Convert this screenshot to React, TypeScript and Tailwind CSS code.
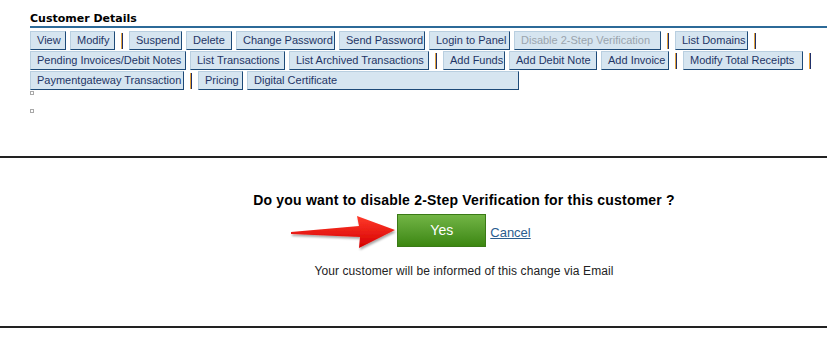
import React from "react";

type Item = { label: string; w: string; disabled?: boolean } | "sep";

const rows: Item[][] = [
  [
    { label: "View", w: "w-[36px]" },
    { label: "Modify", w: "w-[45px]" },
    "sep",
    { label: "Suspend", w: "w-[53px]" },
    { label: "Delete", w: "w-[46px]" },
    { label: "Change Password", w: "w-[99px]" },
    { label: "Send Password", w: "w-[86px]" },
    { label: "Login to Panel", w: "w-[81px]" },
    { label: "Disable 2-Step Verification", w: "w-[147px]", disabled: true },
    "sep",
    { label: "List Domains", w: "w-[73px]" },
    "sep",
  ],
  [
    { label: "Pending Invoices/Debit Notes", w: "w-[156px]" },
    { label: "List Transactions", w: "w-[95px]" },
    { label: "List Archived Transactions", w: "w-[140px]" },
    "sep",
    { label: "Add Funds", w: "w-[62px]" },
    { label: "Add Debit Note", w: "w-[88px]" },
    { label: "Add Invoice", w: "w-[68px]" },
    "sep",
    { label: "Modify Total Receipts", w: "w-[120px]" },
    "sep",
  ],
  [
    { label: "Paymentgateway Transaction", w: "w-[154px]" },
    "sep",
    { label: "Pricing", w: "w-[45px]" },
    { label: "Digital Certificate", w: "w-[272px]" },
  ],
];

function Sep() {
  return (
    <div className="flex h-[16px] w-[6px] shrink-0 justify-center self-center">
      <div className="w-[1px] bg-[#e3a23c]" />
      <div className="w-[1px] bg-[#20306a]" />
    </div>
  );
}

function ActionButton({ label, disabled, w }: { label: string; disabled?: boolean; w: string }) {
  return (
    <button
      className={
        "h-[19px] shrink-0 whitespace-nowrap border border-t-[#b9cfe0] border-l-[#b9cfe0] border-r-[#1d4a78] border-b-[#1d4a78] bg-[#d6e5f0] pl-[6px] text-left text-[11px] leading-[17px] " +
        (disabled ? "text-[#9aa4ad] " : "text-[#1f3566] ") +
        w
      }
    >
      {label}
    </button>
  );
}

function Arrow() {
  return (
    <svg width="112" height="40" viewBox="0 0 112 40" className="absolute left-[-108px] top-[-2px]">
      <defs>
        <linearGradient id="ar" x1="0" y1="0" x2="0" y2="1">
          <stop offset="0" stopColor="#ff3a2a" />
          <stop offset="1" stopColor="#d40000" />
        </linearGradient>
        <filter id="sh" x="-10%" y="-30%" width="130%" height="160%">
          <feDropShadow dx="1" dy="2" stdDeviation="1.2" floodColor="#000" floodOpacity="0.35" />
        </filter>
      </defs>
      <path d="M2 20 L70 14 L68 4 L106 18 L70 36 L71 25 L2 22 Z" fill="url(#ar)" filter="url(#sh)" />
    </svg>
  );
}

export default function App() {
  return (
    <div className="h-[338px] w-[827px] overflow-hidden bg-white font-['Liberation_Sans',Arial,sans-serif]">
      <div className="h-[156px] pl-[30px] pt-[12px]">
        <div className="font-['DejaVu_Sans',Verdana,sans-serif] text-[11px] font-bold leading-[13px] text-black">
          Customer Details
        </div>
        <div className="mt-[1px] h-[2px] bg-[#2c6a98]" />
        <div className="mt-[3px] flex flex-col gap-[1px]">
          {rows.map((row, i) => (
            <div key={i} className="flex items-center gap-[4px]">
              {row.map((it, j) => (it === "sep" ? <Sep key={j} /> : <ActionButton key={j} {...it} />))}
            </div>
          ))}
        </div>
        <div className="mt-[1px] h-[4px] w-[4px] border border-[#a9a9a9]" />
        <div className="mt-[14px] h-[4px] w-[4px] border border-[#a9a9a9]" />
      </div>

      <div className="h-[2px] bg-[#222]" />

      <div className="flex h-[168px] flex-col items-center pl-[101px] pt-[34px]">
        <div className="text-[14px] font-bold leading-[16px] tracking-[0.2px] text-black">
          Do you want to disable 2-Step Verification for this customer ?
        </div>
        <div className="relative mt-[6px] flex items-end gap-[4px]">
          <Arrow />
          <button className="h-[33px] w-[89px] border border-[#3a7a16] bg-gradient-to-b from-[#72b545] to-[#3c870f] text-[14px] text-white">
            Yes
          </button>
          <a href="#" className="mb-[7px] text-[13px] leading-[15px] text-[#2a5d8f] underline">
            Cancel
          </a>
        </div>
        <div className="mt-[17px] text-[12px] leading-[14px] tracking-[0.1px] text-[#222]">
          Your customer will be informed of this change via Email
        </div>
      </div>

      <div className="h-[2px] bg-[#222]" />
    </div>
  );
}
